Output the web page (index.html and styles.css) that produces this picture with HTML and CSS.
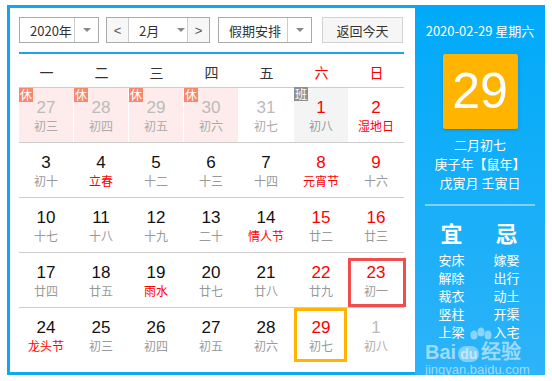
FILE: index.html
```html
<!DOCTYPE html>
<html lang="zh-CN">
<head>
    <meta charset="UTF-8">
    <title>万年历</title>
    <link rel="stylesheet" href="styles.css">
</head>
<body>
    <div class="frame">
        <div class="main">
            <div class="toolbar">
                <div class="select year">
                    <span class="sel-text">2020年</span>
                    <span class="sel-arrow"><i class="tri"></i></span>
                </div>
                <div class="select month">
                    <span class="step">&lt;</span>
                    <span class="month-text">2月<i class="tri"></i></span>
                    <span class="step">&gt;</span>
                </div>
                <div class="select holiday">
                    <span class="sel-text">假期安排</span>
                    <span class="sel-arrow"><i class="tri"></i></span>
                </div>
                <div class="today-btn">返回今天</div>
            </div>

            <div class="week">
                <span>一</span><span>二</span><span>三</span><span>四</span><span>五</span>
                <span class="red">六</span><span class="red">日</span>
            </div>

            <div class="row">
                <div class="cell rest other"><b class="tag">休</b><em>27</em><small>初三</small></div>
                <div class="cell rest other"><b class="tag">休</b><em>28</em><small>初四</small></div>
                <div class="cell rest other"><b class="tag">休</b><em>29</em><small>初五</small></div>
                <div class="cell rest other"><b class="tag">休</b><em>30</em><small>初六</small></div>
                <div class="cell other"><em>31</em><small>初七</small></div>
                <div class="cell work"><b class="tag gray">班</b><em class="red">1</em><small>初八</small></div>
                <div class="cell"><em class="red">2</em><small class="red">湿地日</small></div>
            </div>
            <div class="row">
                <div class="cell"><em>3</em><small>初十</small></div>
                <div class="cell"><em>4</em><small class="red">立春</small></div>
                <div class="cell"><em>5</em><small>十二</small></div>
                <div class="cell"><em>6</em><small>十三</small></div>
                <div class="cell"><em>7</em><small>十四</small></div>
                <div class="cell"><em class="red">8</em><small class="red">元宵节</small></div>
                <div class="cell"><em class="red">9</em><small>十六</small></div>
            </div>
            <div class="row">
                <div class="cell"><em>10</em><small>十七</small></div>
                <div class="cell"><em>11</em><small>十八</small></div>
                <div class="cell"><em>12</em><small>十九</small></div>
                <div class="cell"><em>13</em><small>二十</small></div>
                <div class="cell"><em>14</em><small class="red">情人节</small></div>
                <div class="cell"><em class="red">15</em><small>廿二</small></div>
                <div class="cell"><em class="red">16</em><small>廿三</small></div>
            </div>
            <div class="row">
                <div class="cell"><em>17</em><small>廿四</small></div>
                <div class="cell"><em>18</em><small>廿五</small></div>
                <div class="cell"><em>19</em><small class="red">雨水</small></div>
                <div class="cell"><em>20</em><small>廿七</small></div>
                <div class="cell"><em>21</em><small>廿八</small></div>
                <div class="cell"><em class="red">22</em><small>廿九</small></div>
                <div class="cell picked"><em class="red">23</em><small>初一</small></div>
            </div>
            <div class="row last">
                <div class="cell"><em>24</em><small class="red">龙头节</small></div>
                <div class="cell"><em>25</em><small>初三</small></div>
                <div class="cell"><em>26</em><small>初四</small></div>
                <div class="cell"><em>27</em><small>初五</small></div>
                <div class="cell"><em>28</em><small>初六</small></div>
                <div class="cell today"><em class="red">29</em><small>初七</small></div>
                <div class="cell other"><em>1</em><small>初八</small></div>
            </div>
        </div>

        <div class="side">
            <div class="side-date">2020-02-29 星期六</div>
            <div class="big-day">29</div>
            <div class="lunar">
                <p>二月初七</p>
                <p>庚子年【鼠年】</p>
                <p>戊寅月 壬寅日</p>
            </div>
            <div class="split"></div>
            <div class="yiji">
                <div class="col">
                    <h3>宜</h3>
                    <p>安床</p><p>解除</p><p>裁衣</p><p>竖柱</p><p>上梁</p>
                </div>
                <div class="col">
                    <h3>忌</h3>
                    <p>嫁娶</p><p>出行</p><p>动土</p><p>开渠</p><p>入宅</p>
                </div>
            </div>

            <div class="mark">
                <svg class="paw" width="30" height="26" viewBox="0 0 30 26">
                    <ellipse cx="7" cy="8" rx="3.5" ry="4.5"/>
                    <ellipse cx="14" cy="5" rx="3.5" ry="4.5"/>
                    <ellipse cx="21" cy="8" rx="3.5" ry="4.5"/>
                </svg>
                <div class="mark-logo">Bai<span class="du">du</span>经验</div>
                <div class="mark-url">jingyan.baidu.com</div>
            </div>
        </div>
    </div>
</body>
</html>
```

FILE: styles.css
```css
body{
    margin: 0;
    background: #fff;
    font-family: "Noto Sans CJK SC", "Liberation Sans", sans-serif;
}
.frame{
    margin: 5px 0 0 7px;
    width: 538px;
    height: 370px;
    box-sizing: border-box;
    border: 3px solid #0ea7f2;
    border-right: none;
    display: flex;
}
.main{
    width: 405px;
    padding: 9px 11px 0 9px;
    box-sizing: border-box;
}

/* toolbar */
.toolbar{
    display: flex;
    height: 26px;
    padding-bottom: 9px;
    border-bottom: 2px solid #1ba4ec;
    font-size: 13px;
    color: #333;
    white-space: nowrap;
}
.select{
    display: flex;
    border: 1px solid #aaa;
    box-sizing: border-box;
    height: 26px;
    background: #fff;
    flex-shrink: 0;
}
.sel-text{
    display: flex;
    align-items: center;
    padding-left: 10px;
    border-right: 1px solid #ccc;
}
.sel-arrow{
    display: flex;
    align-items: center;
    justify-content: center;
    width: 23px;
}
.tri{
    display: inline-block;
    width: 0;
    height: 0;
    border-left: 4px solid transparent;
    border-right: 4px solid transparent;
    border-top: 4px solid #888;
}
.year{ width: 80px; }
.year .sel-text{ width: 55px; box-sizing: border-box; }
.month{
    width: 104px;
    margin-left: 7px;
}
.step{
    flex: 0 0 21px;
    display: flex;
    align-items: center;
    justify-content: center;
    background: #f7f7f7;
    color: #555;
    font-family: "Liberation Sans", sans-serif;
    font-size: 13px;
}
.month-text{
    flex: 0 0 60px;
    display: flex;
    align-items: center;
    padding-left: 10px;
    box-sizing: border-box;
    border-left: 1px solid #ccc;
    border-right: 1px solid #ccc;
}
.month-text .tri{ margin-left: 18px; }
.holiday{
    width: 94px;
    margin-left: 8px;
}
.holiday .sel-text{ width: 70px; box-sizing: border-box; }
.today-btn{
    width: 81px;
    height: 26px;
    margin-left: 10px;
    box-sizing: border-box;
    border: 1px solid #d3d3d3;
    background: #f6f6f6;
    display: flex;
    align-items: center;
    justify-content: center;
}

/* weekday header */
.week{
    display: grid;
    grid-template-columns: repeat(7, 55px);
    padding-top: 3px;
    line-height: 30px;
    font-size: 14px;
    color: #333;
    text-align: center;
    border-bottom: 1px solid #ccc;
}
.red{ color: #f00 !important; }

/* day rows */
.row{
    display: grid;
    grid-template-columns: repeat(7, 55px);
    height: 55px;
    box-sizing: border-box;
    border-bottom: 1px solid #ccc;
}
.row.last{ border-bottom: none; }
.cell{
    position: relative;
    border-right: 1px solid #fff;
    padding-top: 10px;
    text-align: center;
}
.cell em{
    display: block;
    font-style: normal;
    font-family: "Liberation Sans", sans-serif;
    font-size: 17px;
    line-height: 20px;
    color: #111;
}
.cell small{
    display: block;
    font-size: 12px;
    line-height: 16px;
    color: #999;
}
.cell.rest{ background: #fdeceb; }
.cell.work{ background: #f4f4f4; }
.cell.other em{ color: #bbb; }
.cell.other small{ color: #aaa; }
.tag{
    position: absolute;
    top: 0;
    left: 0;
    width: 14px;
    height: 14px;
    background: #f8876c;
    color: #fff;
    font-size: 12px;
    font-weight: normal;
    line-height: 14px;
}
.tag.gray{
    background: #8f8f8f;
    top: -1px;
}
.picked::after{
    content: "";
    position: absolute;
    top: 5px;
    left: -1px;
    right: -3px;
    bottom: 0;
    border: 3px solid #f24d4d;
}
.today::after{
    content: "";
    position: absolute;
    top: 0;
    left: 0;
    right: 1px;
    bottom: 1px;
    border: 3px solid #ffb400;
}

/* right panel */
.side{
    position: relative;
    flex: 1;
    margin-top: -3px;
    margin-bottom: -3px;
    background: linear-gradient(#00aaf8, #2db3f8);
    color: #fff;
    text-align: center;
    padding-top: 17px;
}
.side-date{
    font-size: 13px;
    line-height: 18px;
}
.big-day{
    width: 75px;
    height: 75px;
    margin: 14px auto 0;
    background: #ffb400;
    border-radius: 2px;
    box-shadow: 0 1px 3px rgba(0, 60, 120, 0.3);
    font-family: "Liberation Sans", sans-serif;
    font-size: 50px;
    line-height: 75px;
}
.lunar{
    margin-top: 6px;
    font-size: 13px;
    line-height: 19px;
}
.lunar p{ margin: 0; }
.split{
    width: 110px;
    height: 2px;
    margin: 12px auto 0;
    background: rgba(255, 255, 255, 0.45);
}
.yiji{
    display: flex;
    justify-content: center;
    gap: 29px;
    margin-top: 13px;
    padding-right: 2px;
}
.col h3{
    margin: 0 0 6px;
    font-size: 22px;
    line-height: 26px;
    font-weight: bold;
}
.col p{
    margin: 0;
    font-size: 13px;
    line-height: 18px;
}

/* watermark */
.mark{
    position: absolute;
    left: 10px;
    top: 322px;
    width: 110px;
    text-align: left;
    color: rgba(255, 255, 255, 0.55);
}
.paw{
    position: absolute;
    left: 42px;
    top: 0;
    fill: rgba(255, 255, 255, 0.45);
}
.mark-logo{
    margin-top: 16px;
    font-family: "Liberation Sans", sans-serif;
    font-size: 20px;
    font-weight: bold;
    line-height: 18px;
}
.du{
    display: inline-block;
    font-size: 14px;
    background: rgba(255, 255, 255, 0.4);
    border-radius: 8px;
    padding: 0 2px;
    line-height: 16px;
    margin: 0 2px;
}
.mark-url{
    font-family: "Liberation Sans", sans-serif;
    font-size: 13px;
    line-height: 16px;
}
```
